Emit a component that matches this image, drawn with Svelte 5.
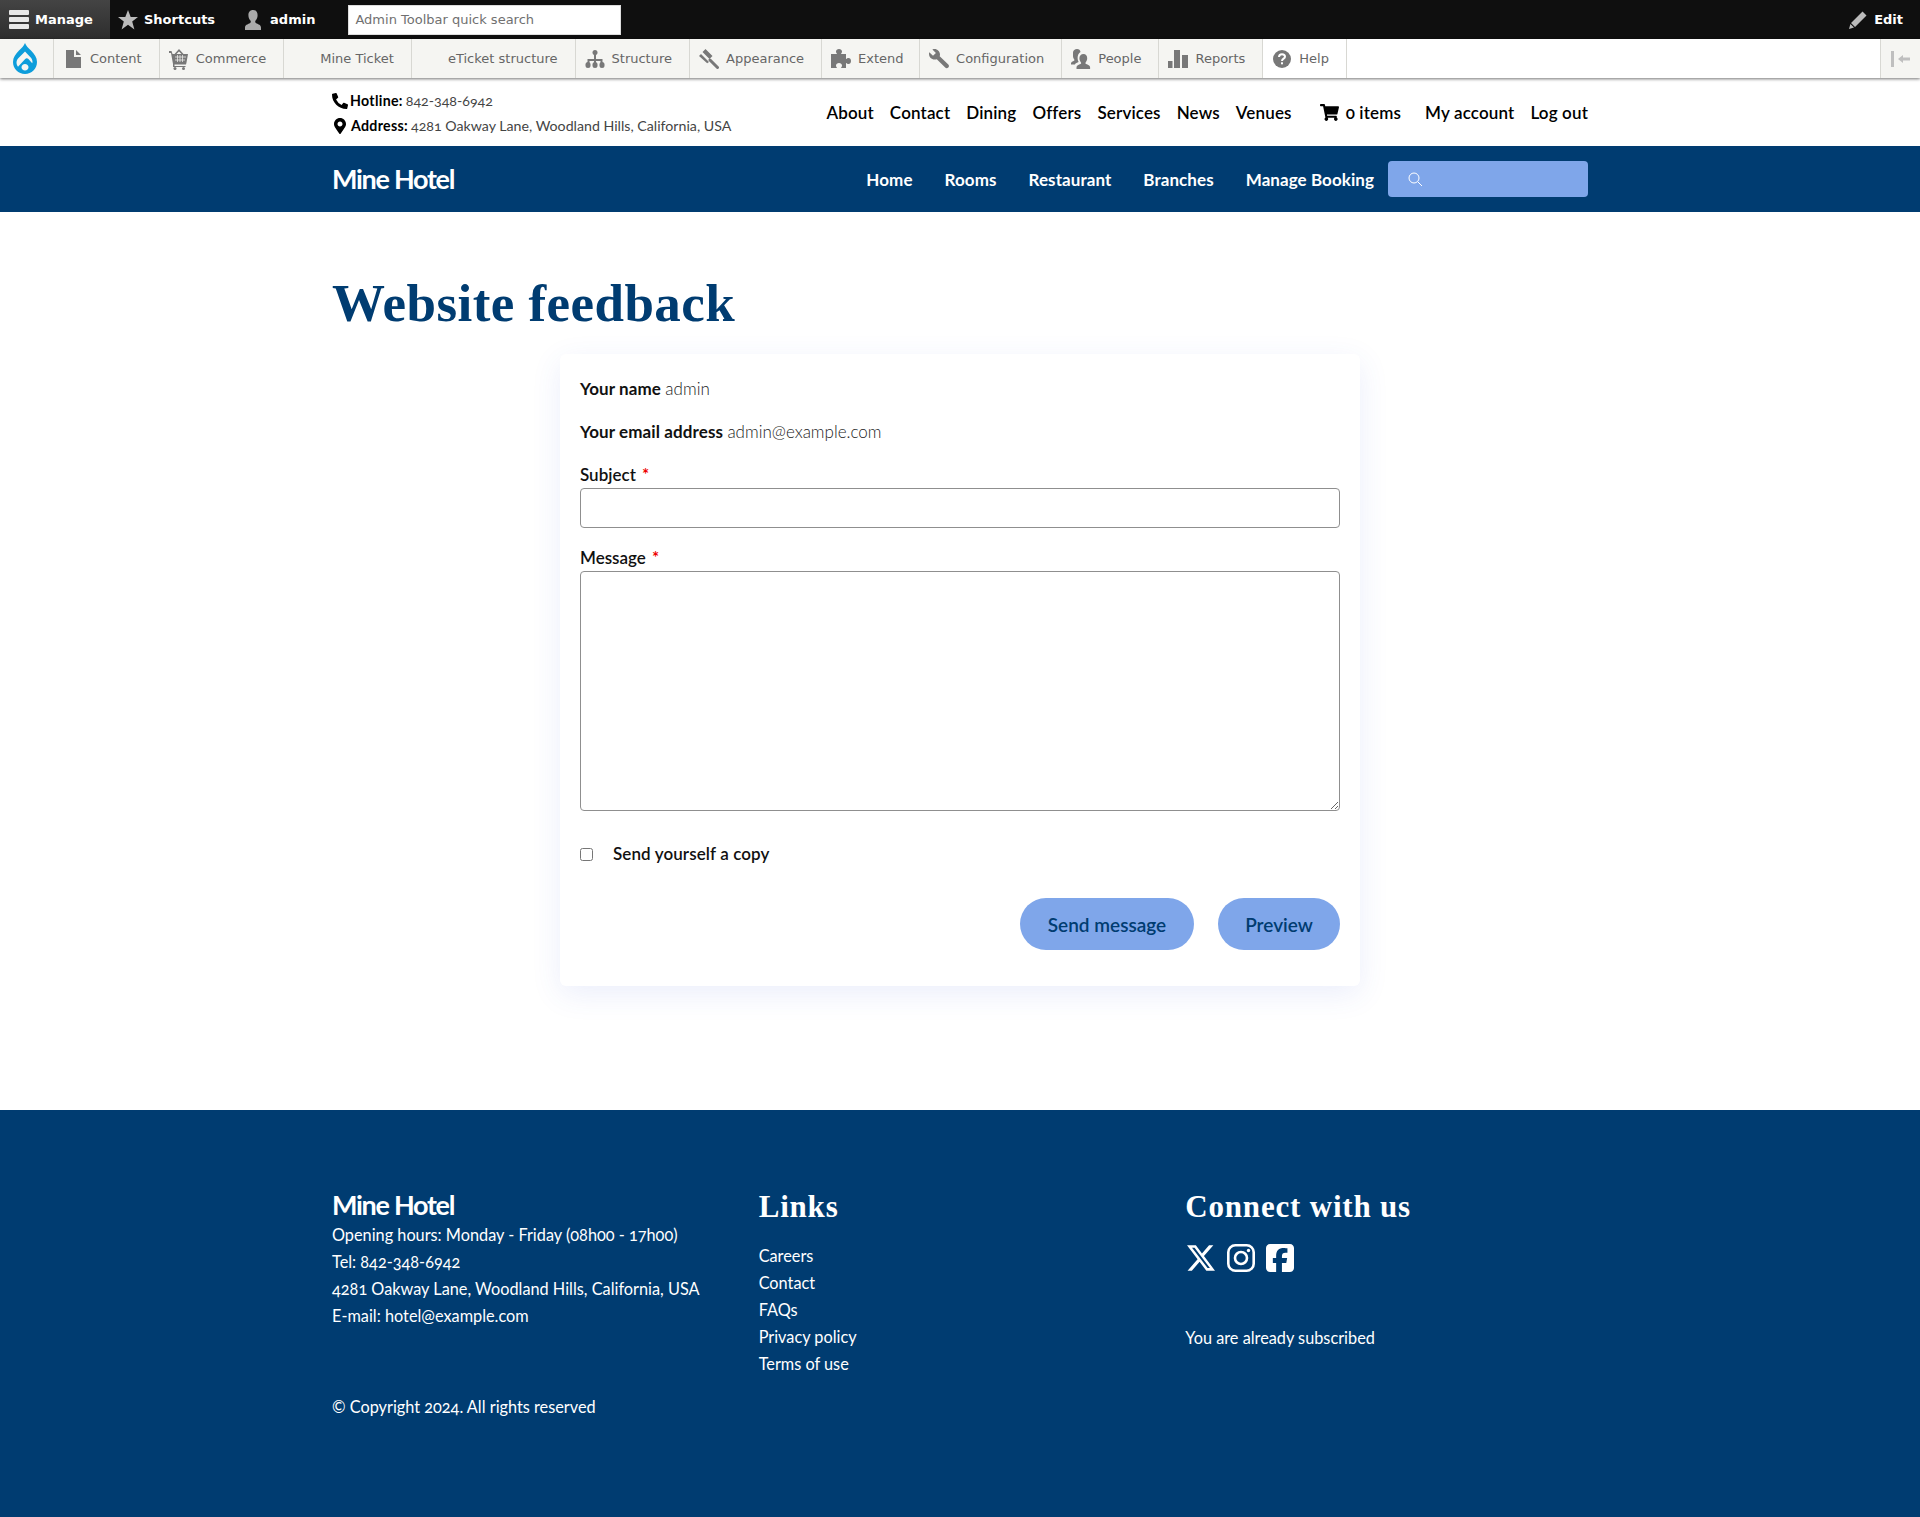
<script>
  const tray = [
    { label: 'Content', icon: 'file' },
    { label: 'Commerce', icon: 'cart' },
    { label: 'Mine Ticket', icon: '' },
    { label: 'eTicket structure', icon: '' },
    { label: 'Structure', icon: 'tree' },
    { label: 'Appearance', icon: 'brush' },
    { label: 'Extend', icon: 'puzzle', tight: true },
    { label: 'Configuration', icon: 'wrench' },
    { label: 'People', icon: 'people' },
    { label: 'Reports', icon: 'bars' },
    { label: 'Help', icon: 'help', light: true }
  ];
  const topLinks = ['About', 'Contact', 'Dining', 'Offers', 'Services', 'News', 'Venues'];
  const mainLinks = ['Home', 'Rooms', 'Restaurant', 'Branches', 'Manage Booking'];
  const footerLinks = ['Careers', 'Contact', 'FAQs', 'Privacy policy', 'Terms of use'];
</script>

<div class="toolbar-bar">
  <a class="bar-item manage" href="#top">
    <svg width="20" height="19" viewBox="0 0 20 19"><path d="M1 0h18a1 1 0 0 1 1 1v3a1 1 0 0 1-1 1H1a1 1 0 0 1-1-1V1a1 1 0 0 1 1-1zm0 7h18a1 1 0 0 1 1 1v3a1 1 0 0 1-1 1H1a1 1 0 0 1-1-1V8a1 1 0 0 1 1-1zm0 7h18a1 1 0 0 1 1 1v3a1 1 0 0 1-1 1H1a1 1 0 0 1-1-1v-3a1 1 0 0 1 1-1z" fill="#e8e8e8"/></svg>
    Manage
  </a>
  <a class="bar-item shortcuts" href="#top">
    <svg width="20" height="20" viewBox="0 0 20 20"><path d="M10 0l2.7 7H20l-5.8 4.6 2.2 7.9L10 14.8l-6.4 4.7 2.2-7.9L0 7h7.3z" fill="#bbb"/></svg>
    Shortcuts
  </a>
  <a class="bar-item user" href="#top">
    <svg width="20" height="20" viewBox="0 0 20 20"><path d="M10 0c3 0 4.6 2.2 4.6 5.2 0 2.3-1 4.4-2.2 5.6-.4.9-.2 1.9.7 2.4 2.3 1 4.9 1.800 4.900 4.300V20H2v-2.500c0-2.500 2.600-3.300 4.900-4.300.9-.5 1.100-1.500.7-2.400C6.400 9.600 5.400 7.500 5.400 5.200 5.400 2.200 7 0 10 0z" fill="#aaa"/></svg>
    admin
  </a>
  <input class="quick-search" type="text" placeholder="Admin Toolbar quick search" />
  <a class="bar-item edit" href="#top">
    <svg width="18" height="18" viewBox="0 0 18 18"><path d="M13.500 0.500l4 4L6 16l-4-4zM1.400 13l3.600 3.600L0 18z" fill="#bbb"/></svg>
    Edit
  </a>
</div>

<div class="toolbar-tray">
  <a class="tray-logo" href="#top" aria-label="Drupal">
    <svg width="24" height="31" viewBox="0 0 24 31">
      <path fill-rule="evenodd" d="M12 0c1 3 3.500 5 6 7.500 3.500 3.500 6 7 6 11.500 0 6.800-5.300 12-12 12S0 25.800 0 19c0-4.500 2.500-8 6-11.500C8.500 5 11 3 12 0zm0 8.500L6.500 14c-1.800 1.800-3 3.300-3 5.500 0 1.500.5 3 1.500 4.200l7.200-7.700c1-1 2.200-1 3.200 0l3.800 4.200c.2-.5.300-1 .3-1.500 0-2.200-1.200-3.700-3-5.500zM12 21c-2 0-3.500 1.500-3.500 3.300S10 27.500 12 27.500s3.500-1.400 3.500-3.200S14 21 12 21z" fill="#0d9ddb"/>
    </svg>
  </a>
  {#each tray as item}
    <a class="tray-item" class:light={item.light} class:tight={item.tight} href="#top">
      <span class="tray-icon">
        {#if item.icon === 'file'}
          <svg width="15" height="18" viewBox="0 0 15 18"><path d="M0 0h8v7h7v11H0zM10 0l5 5h-5z" fill="#787878"/></svg>
        {:else if item.icon === 'cart'}
          <svg width="20" height="22" viewBox="0 0 20 22"><path d="M0 3h2.500l1 3h2L10 1l4.500 5H19l-1.500 8.500-.5 2H5.500v1.500H16.500V19H4V16L2 5H0zM7.500 6h5L10 3.500z" fill="#787878"/><circle cx="6" cy="20.500" r="1.500" fill="#787878"/><circle cx="14.500" cy="20.500" r="1.500" fill="#787878"/><path d="M6 9h11M6 12h10M8.500 7v7M11 7v7M13.500 7v7" stroke="#f5f5f2" stroke-width=".7"/></svg>
        {:else if item.icon === 'tree'}
          <svg width="20" height="18" viewBox="0 0 20 18"><circle cx="10" cy="2.500" r="2.500" fill="#787878"/><path d="M9 4h2v5h6.500v4h-2v-2h-4.500v2H9v-2H4.500v2h-2V9H9z" fill="#787878"/><rect x="0.500" y="12" width="5" height="6" rx="2.500" fill="#787878"/><rect x="7.500" y="12" width="5" height="6" rx="2.500" fill="#787878"/><rect x="14.500" y="12" width="5" height="6" rx="2.500" fill="#787878"/></svg>
        {:else if item.icon === 'brush'}
          <svg width="20" height="20" viewBox="0 0 20 20"><path d="M6.500 0L13.500 7 10.500 10 3.500 3zM2 5l8 8-1.800 1.300L0 7z" fill="#787878"/><path d="M11 11l7.500 7.500" stroke="#787878" stroke-width="3" stroke-linecap="round"/></svg>
        {:else if item.icon === 'puzzle'}
          <svg width="20" height="19" viewBox="0 0 20 19"><path d="M0 5h6c-.5-1-1-1.500-1-2.500C5 1 6.300 0 8 0s3 1 3 2.500c0 1-.5 1.500-1 2.500h5v5c1-.5 1.500-1 2.500-1C19 9 20 10.300 20 12s-1 3-2.500 3c-1 0-1.500-.5-2.500-1v5H10c.5-1 1-1.500 1-2.500C11 15 9.700 14 8 14s-3 1-3 2.500c0 1 .5 1.500 1 2.500H0z" fill="#787878"/></svg>
        {:else if item.icon === 'wrench'}
          <svg width="20" height="20" viewBox="0 0 20 20"><path d="M5.500 0c3 0 5.500 2.500 5.500 5.500 0 .6-.1 1.100-.3 1.700l8.600 8.200c.9.900.9 2.300 0 3.100-.9.900-2.300.9-3.100 0L7.800 10.200c-.7.200-1.500.3-2.300.3C2.500 10.500 0 8 0 5c0-.7.100-1.200.3-1.700L4 6.800l2.900-2.900L3.400.4C4.100.2 4.800 0 5.500 0z" fill="#787878"/></svg>
        {:else if item.icon === 'people'}
          <svg width="20" height="20" viewBox="0 0 20 20"><path d="M12.500 5c2.400 0 3.700 1.800 3.700 4.300 0 1.700-.7 3.200-1.600 4.100-.3.700-.1 1.300.5 1.600 1.700.8 4 1.300 4 3.200V20H5.500v-1.800c0-1.900 2.300-2.400 4-3.200.6-.3.800-.9.500-1.600-.9-.9-1.600-2.400-1.600-4.100C8.400 6.800 10 5 12.500 5z" fill="#787878"/><path d="M6 0c2 0 3.300 1.200 3.500 3-1.700 1-2.900 3-2.900 6 0 1.500.4 2.900 1 4-1.400.6-3 1.200-3.700 2.400H0v-1.100c0-1.500 1.800-2 3-2.600.5-.3.600-.8.300-1.300C2.600 9.600 2 8.300 2 7V3.500C2 1.400 4 0 6 0z" fill="#787878"/></svg>
        {:else if item.icon === 'bars'}
          <svg width="20" height="18" viewBox="0 0 20 18"><rect y="11" width="4.500" height="7" fill="#787878"/><rect x="6" y="0" width="6" height="18" fill="#787878"/><rect x="14" y="5" width="6" height="13" fill="#787878"/></svg>
        {:else if item.icon === 'help'}
          <svg width="18" height="18" viewBox="0 0 18 18"><circle cx="9" cy="9" r="9" fill="#787878"/><path d="M6 7c0-1.800 1.300-2.800 3-2.800s3 1 3 2.500c0 2-3 2-3 4.300" fill="none" stroke="#fff" stroke-width="2"/><rect x="8" y="12.300" width="2" height="2" fill="#fff"/></svg>
        {/if}
      </span>
      {item.label}
    </a>
  {/each}
  <span class="tray-fill"></span>
  <button class="tray-toggle" aria-label="Collapse">
    <svg width="20" height="16" viewBox="0 0 20 16"><rect x="0" y="0" width="3" height="16" fill="#bfbfbf"/><path d="M7 8l5-4v2.500h7v3h-7V12z" fill="#bfbfbf"/></svg>
  </button>
</div>

<header class="site-top">
  <div class="wrap top-inner">
    <div class="contact">
      <div class="contact-line">
        <svg class="phone" width="16" height="16" viewBox="0 0 512 512"><path d="M497.390 361.800l-112-48a24 24 0 0 0-28 6.900l-49.600 60.600A370.660 370.660 0 0 1 130.600 204.110l60.600-49.600a23.940 23.940 0 0 0 6.900-28l-48-112A24.160 24.160 0 0 0 122.600.610l-104 24A24 24 0 0 0 0 48c0 256.500 207.900 464 464 464a24 24 0 0 0 23.400-18.600l24-104a24.290 24.290 0 0 0-14.010-27.600z" fill="#000"/></svg>
        <strong>Hotline:</strong>
        <span>842-348-6942</span>
      </div>
      <div class="contact-line">
        <svg class="pin" width="16" height="16" viewBox="0 0 384 512"><path d="M172.268 501.670C26.970 291.031 0 268.413 0 192 0 85.961 85.961 0 192 0s192 85.961 192 192c0 76.413-26.970 99.031-172.268 309.670-9.535 13.774-29.930 13.773-39.464 0zM192 272c44.183 0 80-35.817 80-80s-35.817-80-80-80-80 35.817-80 80 35.817 80 80 80z" fill="#000"/></svg>
        <strong>Address:</strong>
        <span>4281 Oakway Lane, Woodland Hills, California, USA</span>
      </div>
    </div>
    <nav class="top-nav">
      {#each topLinks as link}
        <a href="#top">{link}</a>
      {/each}
      <a class="cart" href="#top">
        <svg width="19" height="17" viewBox="0 0 576 512"><path d="M528.120 301.319l47.273-208C578.806 78.301 567.391 64 551.990 64H159.208l-9.166-44.810C147.758 8.021 137.930 0 126.529 0H24C10.745 0 0 10.745 0 24v16c0 13.255 10.745 24 24 24h69.883l70.248 343.435C147.325 417.100 136 435.222 136 456c0 30.928 25.072 56 56 56s56-25.072 56-56c0-15.674-6.447-29.835-16.824-40h209.647C430.447 426.165 424 440.326 424 456c0 30.928 25.072 56 56 56s56-25.072 56-56c0-22.172-12.888-41.332-31.579-50.405l5.517-24.276c3.413-15.018-8.002-29.319-23.403-29.319H218.117l-6.545-32h293.145c11.206 0 20.920-7.754 23.403-18.681z" fill="#000"/></svg>
        0 items
      </a>
      <a class="account" href="#top">My account</a>
      <a href="#top">Log out</a>
    </nav>
  </div>
</header>

<div class="site-nav">
  <div class="wrap nav-inner">
    <a class="brand" href="#top">Mine Hotel</a>
    <nav class="main-nav">
      {#each mainLinks as link}
        <a href="#top">{link}</a>
      {/each}
    </nav>
    <div class="site-search">
      <svg width="15" height="15" viewBox="0 0 15 15"><circle cx="6" cy="6" r="5" fill="none" stroke="#fff" stroke-width="1"/><path d="M9.800 9.800L14 14" stroke="#fff" stroke-width="1"/></svg>
    </div>
  </div>
</div>

<main class="wrap page">
  <h1>Website feedback</h1>
  <form class="card" on:submit|preventDefault>
    <div class="row"><strong>Your name</strong> <span class="value">admin</span></div>
    <div class="row"><strong>Your email address</strong> <span class="value">admin@example.com</span></div>
    <label class="row-label" for="subject">Subject <span class="req">*</span></label>
    <input id="subject" class="field" type="text" />
    <label class="row-label msg" for="message">Message <span class="req">*</span></label>
    <textarea id="message" class="field area"></textarea>
    <label class="copy"><input type="checkbox" /> <span>Send yourself a copy</span></label>
    <div class="actions">
      <button type="submit" class="send">Send message</button>
      <button type="button" class="preview">Preview</button>
    </div>
  </form>
</main>

<footer class="site-footer">
  <div class="wrap footer-grid">
    <div class="footer-info">
      <div class="brand">Mine Hotel</div>
      <p>Opening hours: Monday - Friday (08h00 - 17h00)</p>
      <p>Tel: 842-348-6942</p>
      <p>4281 Oakway Lane, Woodland Hills, California, USA</p>
      <p>E-mail: hotel@example.com</p>
      <p class="copyright">© Copyright 2024. All rights reserved</p>
    </div>
    <div>
      <h2>Links</h2>
      <ul>
        {#each footerLinks as link}
          <li><a href="#top">{link}</a></li>
        {/each}
      </ul>
    </div>
    <div>
      <h2>Connect with us</h2>
      <div class="social">
        <svg class="x-logo" width="28" height="26" viewBox="26.800 48 460.200 416"><path d="M389.200 48h70.600L305.600 224.200 487 464H345L233.700 318.600 106.500 464H35.800L200.700 275.500 26.800 48H172.400L272.900 180.900 389.200 48zM364.400 421.800h39.100L151.100 88h-42L364.400 421.800z" fill="#fff"/></svg>
        <svg width="28" height="28" viewBox="0 0 28 28"><rect x="1.300" y="1.300" width="25.400" height="25.400" rx="7" fill="none" stroke="#fff" stroke-width="2.600"/><circle cx="14" cy="14" r="6" fill="none" stroke="#fff" stroke-width="2.600"/><circle cx="21.500" cy="6.500" r="1.700" fill="#fff"/></svg>
        <svg width="28" height="28" viewBox="0 32 448 448"><path d="M64 32C28.700 32 0 60.700 0 96V416c0 35.300 28.700 64 64 64h98.200V334.200H109.400V256h52.800V222.300c0-87.100 39.400-127.500 125-127.500c16.200 0 44.200 3.200 55.700 6.400V172c-6-.6-16.500-1-29.600-1c-42 0-58.200 15.900-58.200 57.200V256h83.600l-14.400 78.200H255V480H384c35.300 0 64-28.700 64-64V96c0-35.300-28.700-64-64-64H64z" fill="#fff"/></svg>
      </div>
      <p class="subscribed">You are already subscribed</p>
    </div>
  </div>
</footer>

<style>
  :global(body) {
    margin: 0;
    font-family: Lato, "Noto Sans", sans-serif;
    font-variant-numeric: oldstyle-nums;
    color: #111;
    background: #fff;
  }

  a {
    color: inherit;
    text-decoration: none;
  }

  .wrap {
    width: 1256px;
    margin: 0 auto;
  }

  /* admin toolbar */
  .toolbar-bar {
    display: flex;
    align-items: center;
    height: 39px;
    background: #0f0f0f;
    font-family: "DejaVu Sans", sans-serif;
    font-size: 13px;
    font-weight: 700;
    color: #fff;
  }

  .bar-item {
    display: flex;
    align-items: center;
    gap: 7px;
    height: 39px;
    padding: 0 9px;
  }

  .manage {
    width: 110px;
    box-sizing: border-box;
    gap: 6px;
    background: linear-gradient(#444, #2d2d2d);
  }

  .shortcuts {
    gap: 6px;
    padding-left: 8px;
  }

  .user {
    margin-left: 10px;
  }

  .quick-search {
    box-sizing: border-box;
    width: 273px;
    height: 30px;
    margin-left: 24px;
    padding: 0 6px;
    border: 1px solid #ddd;
    background: #fff;
    font-family: "DejaVu Sans", sans-serif;
    font-size: 13px;
  }

  .quick-search::placeholder {
    color: #707070;
  }

  .edit {
    margin-left: auto;
    padding-right: 17px;
  }

  .toolbar-tray {
    display: flex;
    height: 39px;
    background: #fff;
    box-shadow: 0 1px 3px rgba(0, 0, 0, 0.55);
    font-family: "DejaVu Sans", sans-serif;
    font-size: 13px;
    color: #666;
    position: relative;
  }

  .tray-logo {
    display: flex;
    align-items: center;
    width: 53px;
    background: #f5f5f2;
    border-right: 1px solid #d8d8d3;
  }

  .tray-logo svg {
    margin-left: 13px;
  }

  .tray-item {
    display: flex;
    align-items: center;
    padding: 0 17px 0 9px;
    background: #f5f5f2;
    border-right: 1px solid #d8d8d3;
    white-space: nowrap;
  }

  .tray-item.tight {
    padding-right: 15.500px;
  }

  .tray-item.light {
    background: #fff;
  }

  .tray-icon {
    display: flex;
    justify-content: center;
    width: 22px;
    margin: 0 6px 0 -1px;
  }

  .tray-fill {
    flex: 1;
  }

  .tray-toggle {
    display: flex;
    align-items: center;
    justify-content: center;
    width: 40px;
    padding: 0;
    border: 0;
    border-left: 1px solid #d8d8d3;
    background: #f5f5f2;
  }

  /* contact row */
  .site-top {
    height: 68px;
  }

  .top-inner {
    display: flex;
    justify-content: space-between;
    align-items: center;
    height: 68px;
  }

  .contact {
    margin-top: 2px;
    font-size: 14.200px;
    color: #444;
  }

  .contact-line {
    display: flex;
    align-items: center;
    gap: 3px;
    height: 25px;
  }

  .contact strong {
    letter-spacing: 0.3px;
    color: #000;
  }

  .phone {
    margin-right: -1px;
  }

  .top-nav {
    display: flex;
    align-items: center;
    gap: 16px;
    font-size: 17px;
    font-weight: 600;
    letter-spacing: 0.15px;
    color: #000;
  }

  .cart {
    display: flex;
    align-items: center;
    gap: 7px;
    margin-left: 12px;
  }

  .account {
    margin-left: 8px;
  }

  /* main nav */
  .site-nav {
    height: 66px;
    background: #003c71;
    color: #fff;
  }

  .nav-inner {
    display: flex;
    align-items: center;
    height: 100%;
  }

  .nav-inner .brand {
    margin-top: -2px;
  }

  .brand {
    font-size: 27px;
    font-weight: 700;
    line-height: 33px;
    letter-spacing: -1.300px;
    color: #fff;
  }

  .main-nav {
    display: flex;
    gap: 32px;
    margin-left: auto;
    font-size: 17px;
    font-weight: 700;
    letter-spacing: 0.07px;
  }

  .site-search {
    display: flex;
    align-items: center;
    box-sizing: border-box;
    width: 200px;
    height: 36px;
    margin-left: 14px;
    padding-left: 20px;
    background: #7fa6ea;
    border-radius: 4px;
  }

  /* page */
  .page {
    padding-bottom: 124px;
  }

  h1 {
    margin: 0;
    padding-top: 61px;
    height: 81px;
    font-family: "Liberation Serif", serif;
    font-size: 53px;
    font-weight: 700;
    line-height: 60px;
    letter-spacing: 0.45px;
    color: #003c71;
  }

  .card {
    box-sizing: border-box;
    width: 800px;
    height: 632px;
    margin: 0 auto;
    padding: 23px 20px 0;
    background: #fff;
    border-radius: 6px;
    box-shadow: 0 8px 30px rgba(60, 90, 220, 0.1);
    font-size: 17px;
    line-height: 24px;
  }

  .row {
    margin-bottom: 19px;
  }

  .row strong {
    letter-spacing: 0.1px;
  }

  .value {
    font-weight: 300;
    color: #222;
  }

  .row-label {
    display: block;
    font-weight: 600;
  }

  .row-label.msg {
    margin-top: 18px;
  }

  .req {
    margin-left: 2px;
    color: #e00;
  }

  .field {
    display: block;
    box-sizing: border-box;
    width: 100%;
    height: 40px;
    margin-top: 1px;
    border: 1px solid #8f8f8f;
    border-radius: 4px;
    background: #fff;
  }

  .area {
    height: 240px;
    resize: vertical;
  }

  .copy {
    display: flex;
    align-items: center;
    gap: 20px;
    margin-top: 31px;
    font-weight: 600;
    letter-spacing: 0.1px;
  }

  .copy input {
    width: 13px;
    height: 13px;
    margin: 0;
  }

  .actions {
    display: flex;
    justify-content: flex-end;
    gap: 24px;
    margin-top: 32px;
  }

  .actions button {
    height: 52px;
    border: 0;
    border-radius: 26px;
    background: #7fa6ea;
    color: #003c71;
    font-family: inherit;
    font-size: 19px;
    font-weight: 600;
  }

  .send {
    width: 174px;
  }

  .preview {
    width: 122px;
  }

  /* footer */
  .site-footer {
    padding: 79px 0 97px;
    background: #003c71;
    color: #fff;
    font-size: 16.300px;
    line-height: 27px;
  }

  .footer-grid {
    display: grid;
    grid-template-columns: repeat(3, 1fr);
    gap: 24px;
  }

  .footer-info {
    margin-top: -1px;
  }

  .site-footer p {
    margin: 0;
  }

  .site-footer p.copyright {
    margin-top: 64px;
  }

  h2 {
    margin: 0;
    font-family: "Liberation Serif", serif;
    font-size: 31px;
    font-weight: 700;
    line-height: 36px;
    letter-spacing: 0.8px;
  }

  ul {
    margin: 17px 0 0;
    padding: 0;
    list-style: none;
  }

  .social {
    display: flex;
    align-items: center;
    gap: 11.500px;
    margin-top: 19px;
  }

  .x-logo {
    margin-left: 2px;
  }

  .site-footer p.subscribed {
    margin-top: 52px;
  }
</style>
